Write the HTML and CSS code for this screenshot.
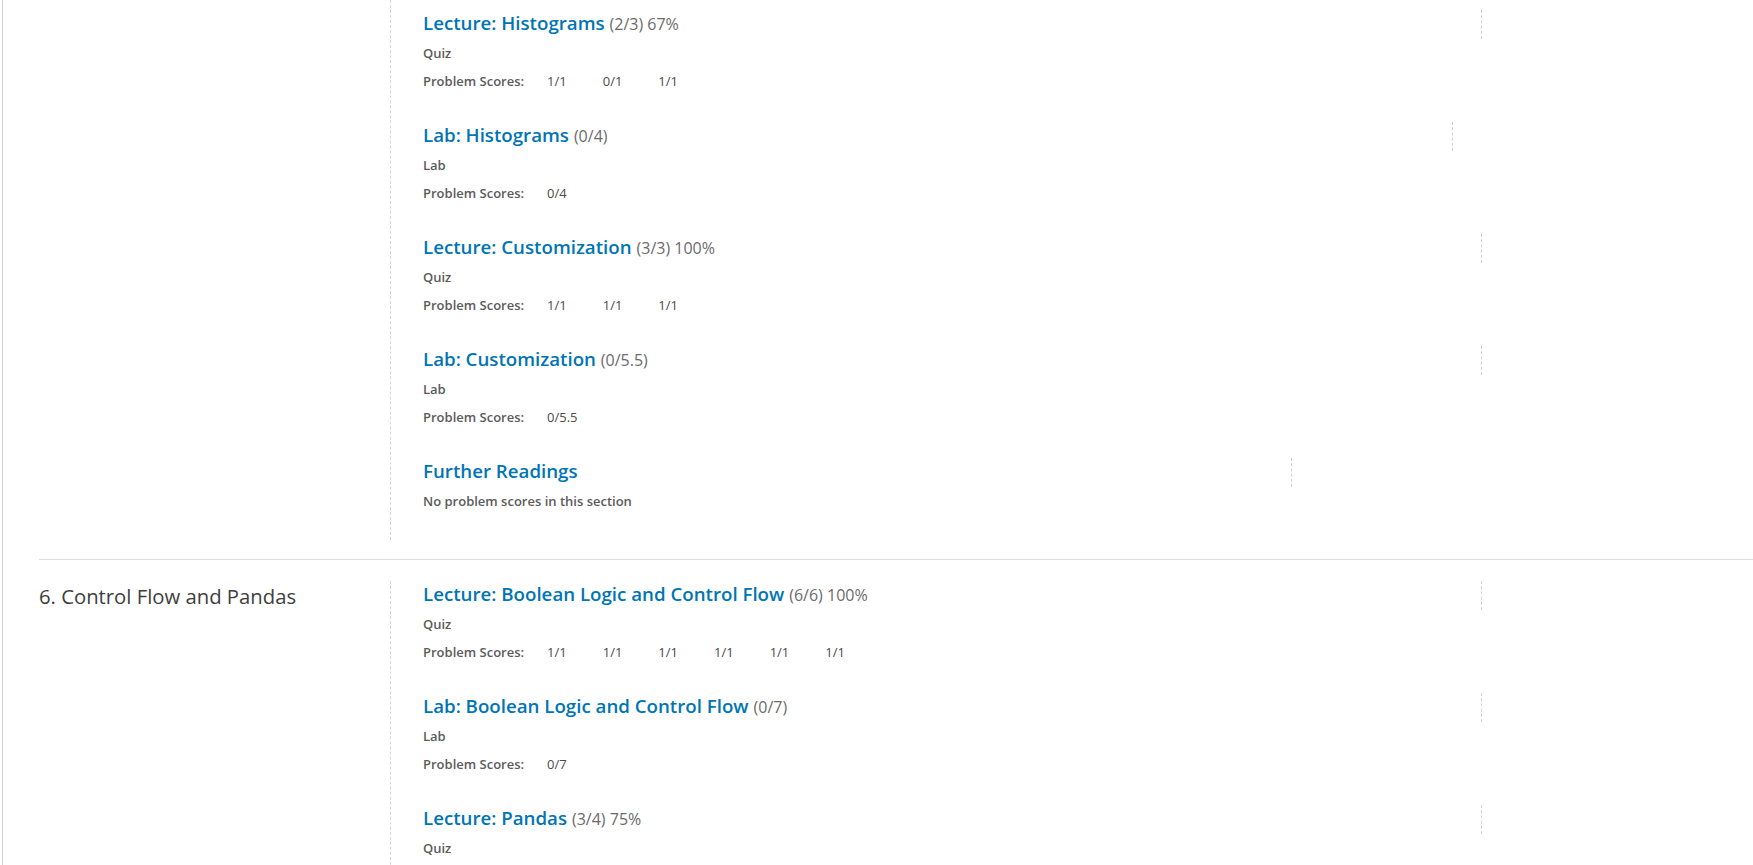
FILE: index.html
```html
<!DOCTYPE html>
<html lang="en">
<head>
<meta charset="utf-8">
<title>Progress</title>
<link rel="stylesheet" href="styles.css">
</head>
<body>
<main class="page">
  <section class="chapter chapter--partial">
    <div class="chapter-title"></div>
    <div class="sections">
      <div class="section">
        <h3 class="section-head head-wide"><a href="#">Lecture: Histograms</a> <span class="grade">(2/3) 67%</span></h3>
        <p class="kind">Quiz</p>
        <dl class="scores"><dt>Problem Scores:</dt><dd>1/1</dd><dd>0/1</dd><dd>1/1</dd></dl>
      </div>
      <div class="section">
        <h3 class="section-head head-mid"><a href="#">Lab: Histograms</a> <span class="grade">(0/4)</span></h3>
        <p class="kind">Lab</p>
        <dl class="scores"><dt>Problem Scores:</dt><dd>0/4</dd></dl>
      </div>
      <div class="section">
        <h3 class="section-head head-wide"><a href="#">Lecture: Customization</a> <span class="grade">(3/3) 100%</span></h3>
        <p class="kind">Quiz</p>
        <dl class="scores"><dt>Problem Scores:</dt><dd>1/1</dd><dd>1/1</dd><dd>1/1</dd></dl>
      </div>
      <div class="section">
        <h3 class="section-head head-wide"><a href="#">Lab: Customization</a> <span class="grade">(0/5.5)</span></h3>
        <p class="kind">Lab</p>
        <dl class="scores"><dt>Problem Scores:</dt><dd>0/5.5</dd></dl>
      </div>
      <div class="section">
        <h3 class="section-head head-narrow"><a href="#">Further Readings</a></h3>
        <p class="kind">No problem scores in this section</p>
      </div>
    </div>
  </section>

  <section class="chapter">
    <h2 class="chapter-title">6. Control Flow and Pandas</h2>
    <div class="sections">
      <div class="section">
        <h3 class="section-head head-wide"><a href="#">Lecture: Boolean Logic and Control Flow</a> <span class="grade">(6/6) 100%</span></h3>
        <p class="kind">Quiz</p>
        <dl class="scores"><dt>Problem Scores:</dt><dd>1/1</dd><dd>1/1</dd><dd>1/1</dd><dd>1/1</dd><dd>1/1</dd><dd>1/1</dd></dl>
      </div>
      <div class="section">
        <h3 class="section-head head-wide"><a href="#">Lab: Boolean Logic and Control Flow</a> <span class="grade">(0/7)</span></h3>
        <p class="kind">Lab</p>
        <dl class="scores"><dt>Problem Scores:</dt><dd>0/7</dd></dl>
      </div>
      <div class="section">
        <h3 class="section-head head-wide"><a href="#">Lecture: Pandas</a> <span class="grade">(3/4) 75%</span></h3>
        <p class="kind">Quiz</p>
        <dl class="scores"><dt>Problem Scores:</dt><dd>1/1</dd><dd>1/1</dd><dd>0/1</dd><dd>1/1</dd></dl>
      </div>
    </div>
  </section>
</main>
</body>
</html>
```

FILE: styles.css
```css
html, body {
  margin: 0;
  padding: 0;
  background: #fff;
  overflow: hidden;
}

body {
  font-family: "Open Sans", "Liberation Sans", sans-serif;
  color: #4a4a4a;
}

.page {
  margin-left: 2px;
  border-left: 1px solid #cfcfcf;
  min-height: 100vh;
}

.chapter {
  display: flex;
  margin-left: 36px;
  padding: 21px 0 19px;
  border-bottom: 1px solid #dedede;
}

.chapter--partial {
  padding-top: 0;
}

.chapter--partial .sections {
  padding-top: 10px;
}

.chapter-title {
  flex: 0 0 351px;
  margin: 0;
  font-size: 20.3px;
  font-weight: 400;
  line-height: 30px;
  color: #3e3e3e;
}

.sections {
  flex: 1;
  border-left: 1px dashed #d6d6d6;
  padding: 0 0 30px 32px;
}

.section + .section {
  margin-top: 32px;
}

.section-head {
  margin: 0;
  box-sizing: border-box;
  height: 29px;
  padding-bottom: 4px;
  font-size: 19px;
  font-weight: 400;
  line-height: 25px;
  border-right: 1px dashed #cfcfcf;
  white-space: nowrap;
}

.head-wide { width: 1059px; }
.head-mid { width: 1030px; }
.head-narrow { width: 869px; }

.section-head a {
  color: #0075b4;
  text-decoration: none;
  font-weight: 600;
  font-size: 18.7px;
}

.grade {
  font-size: 16px;
  color: #6b6b6b;
}

.kind {
  margin: 5px 0 0;
  font-size: 13px;
  font-weight: 600;
  line-height: 18px;
  color: #5b5b5b;
}

.scores {
  display: flex;
  margin: 10px 0 0;
  font-size: 13px;
  line-height: 18px;
}

.scores dt {
  font-weight: 600;
  color: #5b5b5b;
  margin-right: 23px;
}

.scores dd {
  margin: 0 36px 0 0;
  color: #4a4a4a;
}
```
